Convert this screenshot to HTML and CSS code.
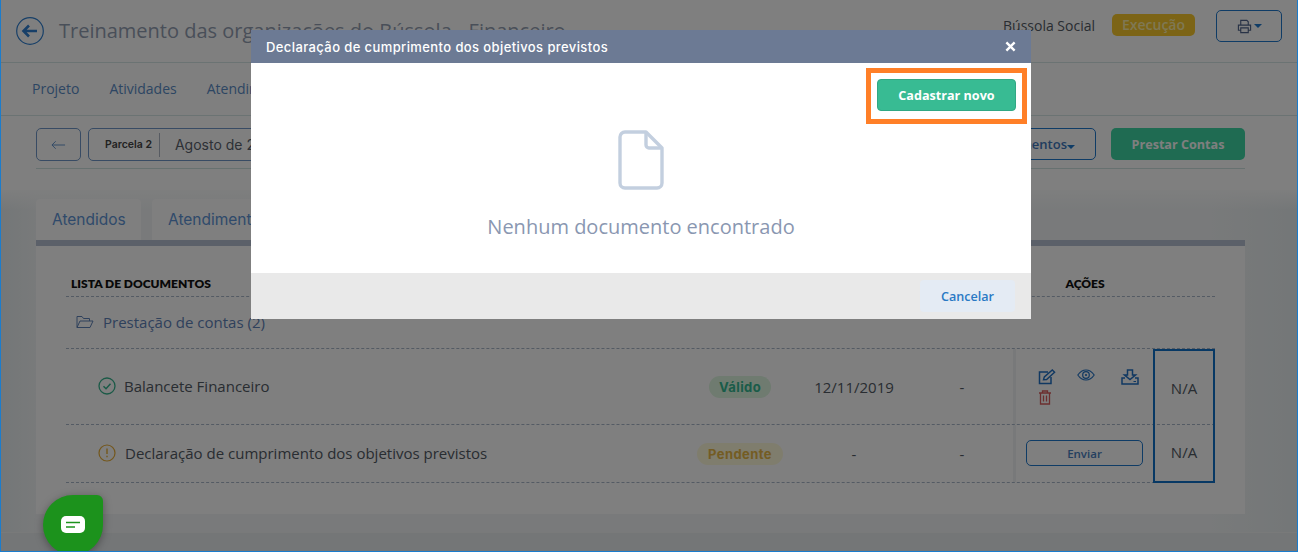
FILE: index.html
```html
<!DOCTYPE html>
<html lang="pt">
<head>
<meta charset="utf-8">
<title>Declaração de cumprimento</title>
<link rel="stylesheet" href="styles.css">
</head>
<body>
<header class="top">
  <svg class="back-circle" viewBox="0 0 28 28" width="28" height="28"><circle cx="14" cy="14" r="13.3" fill="none" stroke="#2f7fd0" stroke-width="1.2"/><path d="M21 14H8M13 8.5 7.5 14l5.500 5.500" fill="none" stroke="#2f7fd0" stroke-width="2.600"/></svg>
  <h1 class="title">Treinamento das organizações do Bússola - Financeiro</h1>
  <span class="org">Bússola Social</span>
  <span class="badge-exec">Execução</span>
  <button class="print">
    <svg viewBox="0 0 16 16" width="15" height="15"><path d="M4 6V1.500h6.500L12 3v3M4 12H1.500V6.500h13V12H12M4 9.500h8v5H4z" fill="none" stroke="#50648c" stroke-width="1.200"/></svg>
    <i class="caret"></i>
  </button>
</header>
<nav class="nav">
  <a>Projeto</a><a>Atividades</a><a>Atendimentos</a>
</nav>
<section class="toolbar">
  <div class="bar">
    <button class="tool-back"><svg viewBox="0 0 16 10" width="15" height="10"><path d="M15 5H1M5 1 1 5l4 4" fill="none" stroke="#5d8fca" stroke-width="1"/></svg></button>
    <div class="period"><b>Parcela 2</b><span>Agosto de 2019</span></div>
    <button class="docs">Documentos<i class="caret"></i></button>
    <button class="account">Prestar Contas</button>
  </div>
</section>
<main class="content">
  <div class="tabs"><a class="tab tab-a">Atendidos</a><a class="tab tab-b">Atendimentos</a></div>
  <section class="card">
    <div class="row head">
      <div class="c-name">LISTA DE DOCUMENTOS</div><div></div><div></div><div></div><div class="c-act-h">AÇÕES</div><div></div>
    </div>
    <div class="row folder">
      <div class="c-name">
        <svg viewBox="0 0 18 14" width="18" height="14"><path d="M1 12.500V1.500h5l1.500 2h6v2.500M1 12.500 4 6h13l-3 6.500z" fill="none" stroke="#5f82b8" stroke-width="1"/></svg>
        <span>Prestação de contas (2)</span>
      </div>
    </div>
    <div class="row doc doc-1">
      <div class="c-name">
        <svg class="st" viewBox="0 0 18 18" width="18" height="18"><circle cx="9" cy="9" r="8" fill="none" stroke="#36b48e" stroke-width="1.300"/><path d="M5.500 9.300 8 11.700l4.500-5" fill="none" stroke="#36b48e" stroke-width="1.500"/></svg>
        <span>Balancete Financeiro</span>
      </div>
      <div class="c-status"><span class="pill ok">Válido</span></div>
      <div class="c-date">12/11/2019</div>
      <div class="c-val">-</div>
      <div class="c-act">
        <div class="icons">
          <svg viewBox="0 0 18 16" width="18" height="16"><path d="M10 3H1.500v11.500H13V8" fill="none" stroke="#2070c4" stroke-width="1.500"/><path d="M5.500 10.800 6.300 8l8-7 2.300 2.300-8 7.300z" fill="none" stroke="#2070c4" stroke-width="1.400"/></svg>
          <svg viewBox="0 0 18 12" width="18" height="12"><path d="M.8 6C3 2.800 5.800 1 9 1s6 1.800 8.200 5C15 9.200 12.200 11 9 11S3 9.200.8 6z" fill="none" stroke="#2070c4" stroke-width="1.100"/><circle cx="9" cy="6" r="3.300" fill="none" stroke="#2070c4" stroke-width="1.200"/><circle cx="9" cy="6" r="1.100" fill="#2070c4"/></svg>
          <svg viewBox="0 0 18 16" width="18" height="16"><path d="M6.500 1h5v5h3L9 10.500 3.500 6h3zM4 9H1v6h16V9h-3" fill="none" stroke="#2070c4" stroke-width="1.500"/><path d="M12.500 12.500H15" stroke="#2070c4" stroke-width="1"/></svg>
          <svg viewBox="0 0 14 15" width="14" height="15"><path d="M1 3h12M4.500 3V1h5v2M2.500 3v11h9V3M5.500 5.500v6M8.500 5.500v6" fill="none" stroke="#d85c5c" stroke-width="1.300"/></svg>
        </div>
      </div>
      <div class="c-na na-top">N/A</div>
    </div>
    <div class="row doc doc-2">
      <div class="c-name">
        <svg class="st" viewBox="0 0 18 18" width="18" height="18"><circle cx="9" cy="9" r="8" fill="none" stroke="#e8ae38" stroke-width="1.200"/><path d="M9 4.500v5.500M9 11.800v1.500" fill="none" stroke="#e8ae38" stroke-width="1.400"/></svg>
        <span>Declaração de cumprimento dos objetivos previstos</span>
      </div>
      <div class="c-status"><span class="pill wait">Pendente</span></div>
      <div class="c-date">-</div>
      <div class="c-val">-</div>
      <div class="c-act"><button class="send">Enviar</button></div>
      <div class="c-na na-bottom">N/A</div>
    </div>
  </section>
</main>
<footer class="foot"></footer>
<div class="backdrop"></div>
<div class="modal">
  <div class="m-head">
    <span>Declaração de cumprimento dos objetivos previstos</span>
    <svg viewBox="0 0 12 12" width="11" height="11"><path d="M1.500 1.500l9 9M10.500 1.500l-9 9" stroke="#fff" stroke-width="2.600" fill="none"/></svg>
  </div>
  <div class="m-body">
    <div class="m-actions"><div class="mark"><button class="new">Cadastrar novo</button></div></div>
    <svg class="file" viewBox="0 0 46 60" width="46" height="60"><path d="M28 2H7a5 5 0 0 0-5 5v46a5 5 0 0 0 5 5h32a5 5 0 0 0 5-5V18L28 2z" fill="none" stroke="#c3cfdf" stroke-width="3.400" stroke-linejoin="round"/><path d="M28 2v13a3 3 0 0 0 3 3h13" fill="none" stroke="#c3cfdf" stroke-width="3.400" stroke-linejoin="round"/></svg>
    <p class="empty">Nenhum documento encontrado</p>
  </div>
  <div class="m-foot"><button class="cancel">Cancelar</button></div>
</div>
<div class="chat">
  <svg viewBox="0 0 24 17" width="24" height="17"><rect width="24" height="17" rx="5" fill="#fff"/><path d="M5 6.500h14" stroke="#1c921c" stroke-width="1.500"/><path d="M5 11h9" stroke="#1c921c" stroke-width="1.500"/></svg>
</div>
</body>
</html>
```
FILE: styles.css
```css
* { box-sizing: border-box; }
html, body { margin: 0; padding: 0; }
body {
  position: relative;
  width: 1298px;
  height: 552px;
  overflow: hidden;
  border: 1px solid #1b7ccc;
  border-top: 0;
  background: #eef3f4;
  font-family: "Open Sans", sans-serif;
  font-size: 14px;
  color: #626a75;
}
button { font-family: inherit; background: none; cursor: pointer; }

.top {
  height: 63px;
  display: flex;
  align-items: flex-start;
  padding: 17px 15px 0 15px;
  background: #fff;
  border-bottom: 1px solid #d6e6e6;
}
.title {
  margin: 0 0 0 15px;
  flex: 1;
  font-size: 20px;
  line-height: 28px;
  font-weight: 400;
  color: #939eb2;
}
.org { color: #525a64; margin-top: -1px; line-height: 20px; }
.badge-exec {
  margin: -3px 0 0 17px;
  width: 83px;
  height: 22px;
  border-radius: 5px;
  background: #f8c92c;
  color: #fff0a8;
  font-size: 14px;
  font-weight: 600;
  text-align: center;
  line-height: 22px;
}
.print {
  margin: -7px 0 0 21px;
  width: 66px;
  height: 32px;
  border: 1px solid #1f78cc;
  border-radius: 5px;
  display: flex;
  align-items: center;
  justify-content: center;
  gap: 2px;
}
.caret {
  display: inline-block;
  border: 4px solid transparent;
  border-top-color: #1f78cc;
  border-bottom: 0;
}

.nav {
  height: 53px;
  display: flex;
  align-items: center;
  gap: 30px;
  padding: 0 0 1px 31px;
  background: #fff;
  border-bottom: 1px solid #d6e6e6;
  color: #5a8cc6;
}

.toolbar {
  height: 74px;
  background: #fff;
  padding: 12px 52px 0 35px;
}
.bar {
  height: 41px;
  display: flex;
  align-items: flex-start;
  border-bottom: 1px solid #cfe3e0;
}
.tool-back {
  width: 45px;
  height: 33px;
  border: 1px solid #7097c8;
  border-radius: 5px;
  display: flex;
  align-items: center;
  justify-content: center;
  padding: 0;
}
.period {
  margin-left: 7px;
  flex: 1;
  max-width: 770px;
  height: 33px;
  border: 1px solid #7097c8;
  border-radius: 5px;
  display: flex;
  align-items: center;
  padding-left: 16px;
  font-family: Inter, sans-serif;
}
.period b {
  font-size: 10.500px;
  font-weight: 600;
  color: #444;
  padding-right: 7px;
  height: 24px;
  line-height: 24px;
  border-right: 1px solid #aeb6c4;
}
.period span { margin-left: 15px; color: #5a626d; font-size: 14px; }
.docs {
  margin-left: auto;
  width: 150px;
  height: 32px;
  border: 1px solid #1f78cc;
  border-radius: 5px;
  color: #4078bc;
  font-size: 13px;
  font-weight: 600;
  text-align: right;
  padding: 0 20px 0 0;
}
.account {
  margin-left: 15px;
  width: 134px;
  height: 32px;
  border: 0;
  border-radius: 5px;
  background: #3ed6a4;
  color: #fff;
  font-size: 12.600px;
  font-weight: 700;
}

.content {
  height: 343px;
  padding: 9px 52px 0 35px;
  background:
    linear-gradient(180deg, #fcfdfd, rgba(252, 253, 253, 0) 20px),
    linear-gradient(90deg, #e8eef0, #f2f5f6 36px, #f2f5f6 1209px, #e8eef0);
  border-bottom: 1px solid #f2f4f5;
}
.tabs {
  display: flex;
  gap: 11px;
  height: 41px;
}
.tab {
  height: 41px;
  line-height: 41px;
  background: #fefefe;
  border-radius: 4px 4px 0 0;
  color: #5f95d6;
  font-family: Inter, sans-serif;
  font-size: 15.500px;
  padding: 0 16px;
}
.tab-a { width: 105px; }
.tab-b { width: 180px; }
.card {
  height: 274px;
  background: #fefefe;
  border-top: 6px solid #b7c0d2;
  padding: 24px 30px 0 30px;
}
.row {
  display: grid;
  grid-template-columns: 630px 88px 140px 89px 140px 62px;
  border-bottom: 1px dashed #a9b7c9;
  width: 1149px;
}
.head { height: 27px; align-items: start; padding-top: 6px; font-weight: 800; font-family: Lato, sans-serif; color: #111; }
.head .c-name { padding-left: 5px; font-size: 12px; }
.c-act-h { text-align: center; padding-left: 4px; font-size: 12px; }
.folder { height: 52px; align-items: center; padding-bottom: 2px; color: #5f82b8; }
.folder .c-name { display: flex; align-items: center; padding-left: 10px; gap: 9px; font-size: 15px; }
.doc { color: #525a64; align-items: stretch; font-size: 15px; }
.doc-1 { height: 76px; }
.doc-2 { height: 58px; }
.doc .c-name { display: flex; align-items: center; gap: 8px; padding-left: 32px; padding-bottom: 1px; }
.doc-2 .c-name span { margin-left: 1px; }
.c-status, .c-date, .c-val, .c-na { display: flex; align-items: center; justify-content: center; }
.c-val { padding-right: 13px; }
.pill {
  font-family: Inter, sans-serif;
  font-size: 13px;
  letter-spacing: .4px;
  font-weight: 700;
  height: 22px;
  line-height: 22px;
  border-radius: 11px;
  text-align: center;
  flex: none;
}
.ok { width: 62px; background: #def6e0; color: #34b892; }
.wait { width: 86px; background: #fffadb; color: #e8b846; }
.c-act { border-left: 3px solid #f0f2f4; }
.doc-1 .c-act { padding: 20px 0 0 22px; }
.icons {
  display: grid;
  grid-template-columns: 39px 44px 18px;
  row-gap: 5px;
}
.doc-2 .c-act { padding: 15px 0 0 10px; }
.send {
  width: 117px;
  height: 26px;
  border: 1px solid #1f78cc;
  border-radius: 5px;
  color: #4a80c0;
  font-size: 11.500px;
  font-weight: 600;
  padding: 0;
}
.c-na { color: #525a64; border-left: 2px solid #0f70c8; border-right: 2px solid #0f70c8; }
.na-top { border-top: 2px solid #0f70c8; margin-bottom: -1px; }
.na-bottom { border-bottom: 2px solid #0f70c8; padding-bottom: 2px; margin-bottom: -1px; }
.foot { height: 20px; background: #e9edee; }

.backdrop {
  position: absolute;
  inset: 0;
  background: rgba(0, 0, 0, .5);
}
.modal {
  position: absolute;
  left: 250px;
  top: 30px;
  width: 780px;
  height: 289px;
  display: flex;
  flex-direction: column;
  background: #fff;
}
.m-head {
  height: 33px;
  background: #6c7a94;
  color: #fff;
  display: flex;
  align-items: center;
  justify-content: space-between;
  padding: 0 15px;
  font-family: Inter, sans-serif;
  font-size: 13px;
  letter-spacing: .4px;
  font-weight: 500;
}
.m-body {
  flex: 1;
  display: flex;
  flex-direction: column;
  align-items: center;
  padding: 16px 15px 0;
}
.m-actions { align-self: flex-end; height: 32px; }
.mark { position: relative; }
.mark::after {
  content: "";
  position: absolute;
  left: -11px;
  right: -11px;
  top: -11px;
  bottom: -13px;
  border: 5px solid #ff7f27;
  pointer-events: none;
}
.new {
  width: 139px;
  height: 32px;
  display: block;
  border: 1px solid #31a884;
  border-radius: 4px;
  background: #38bb93;
  color: #fff;
  font-size: 12.600px;
  font-weight: 700;
}
.file { margin-top: 19px; flex: none; }
.empty {
  margin: 23px 0 0;
  font-size: 20px;
  line-height: 27px;
  color: #8a97b1;
}
.m-foot {
  height: 46px;
  background: #e9e9e9;
  display: flex;
  justify-content: flex-end;
  padding: 7px 16px 0 0;
}
.cancel {
  width: 95px;
  height: 32px;
  border: 0;
  border-radius: 4px;
  background: #e4ebf4;
  color: #2a79c4;
  font-size: 12.600px;
  font-weight: 600;
}
.chat {
  position: absolute;
  left: 42px;
  top: 495px;
  width: 60px;
  height: 60px;
  background: #1c921c;
  border-radius: 50% 6px 50% 50%;
  box-shadow: 0 2px 8px rgba(0, 0, 0, .35);
  display: flex;
  align-items: center;
  justify-content: center;
  padding-bottom: 2px;
}
```
